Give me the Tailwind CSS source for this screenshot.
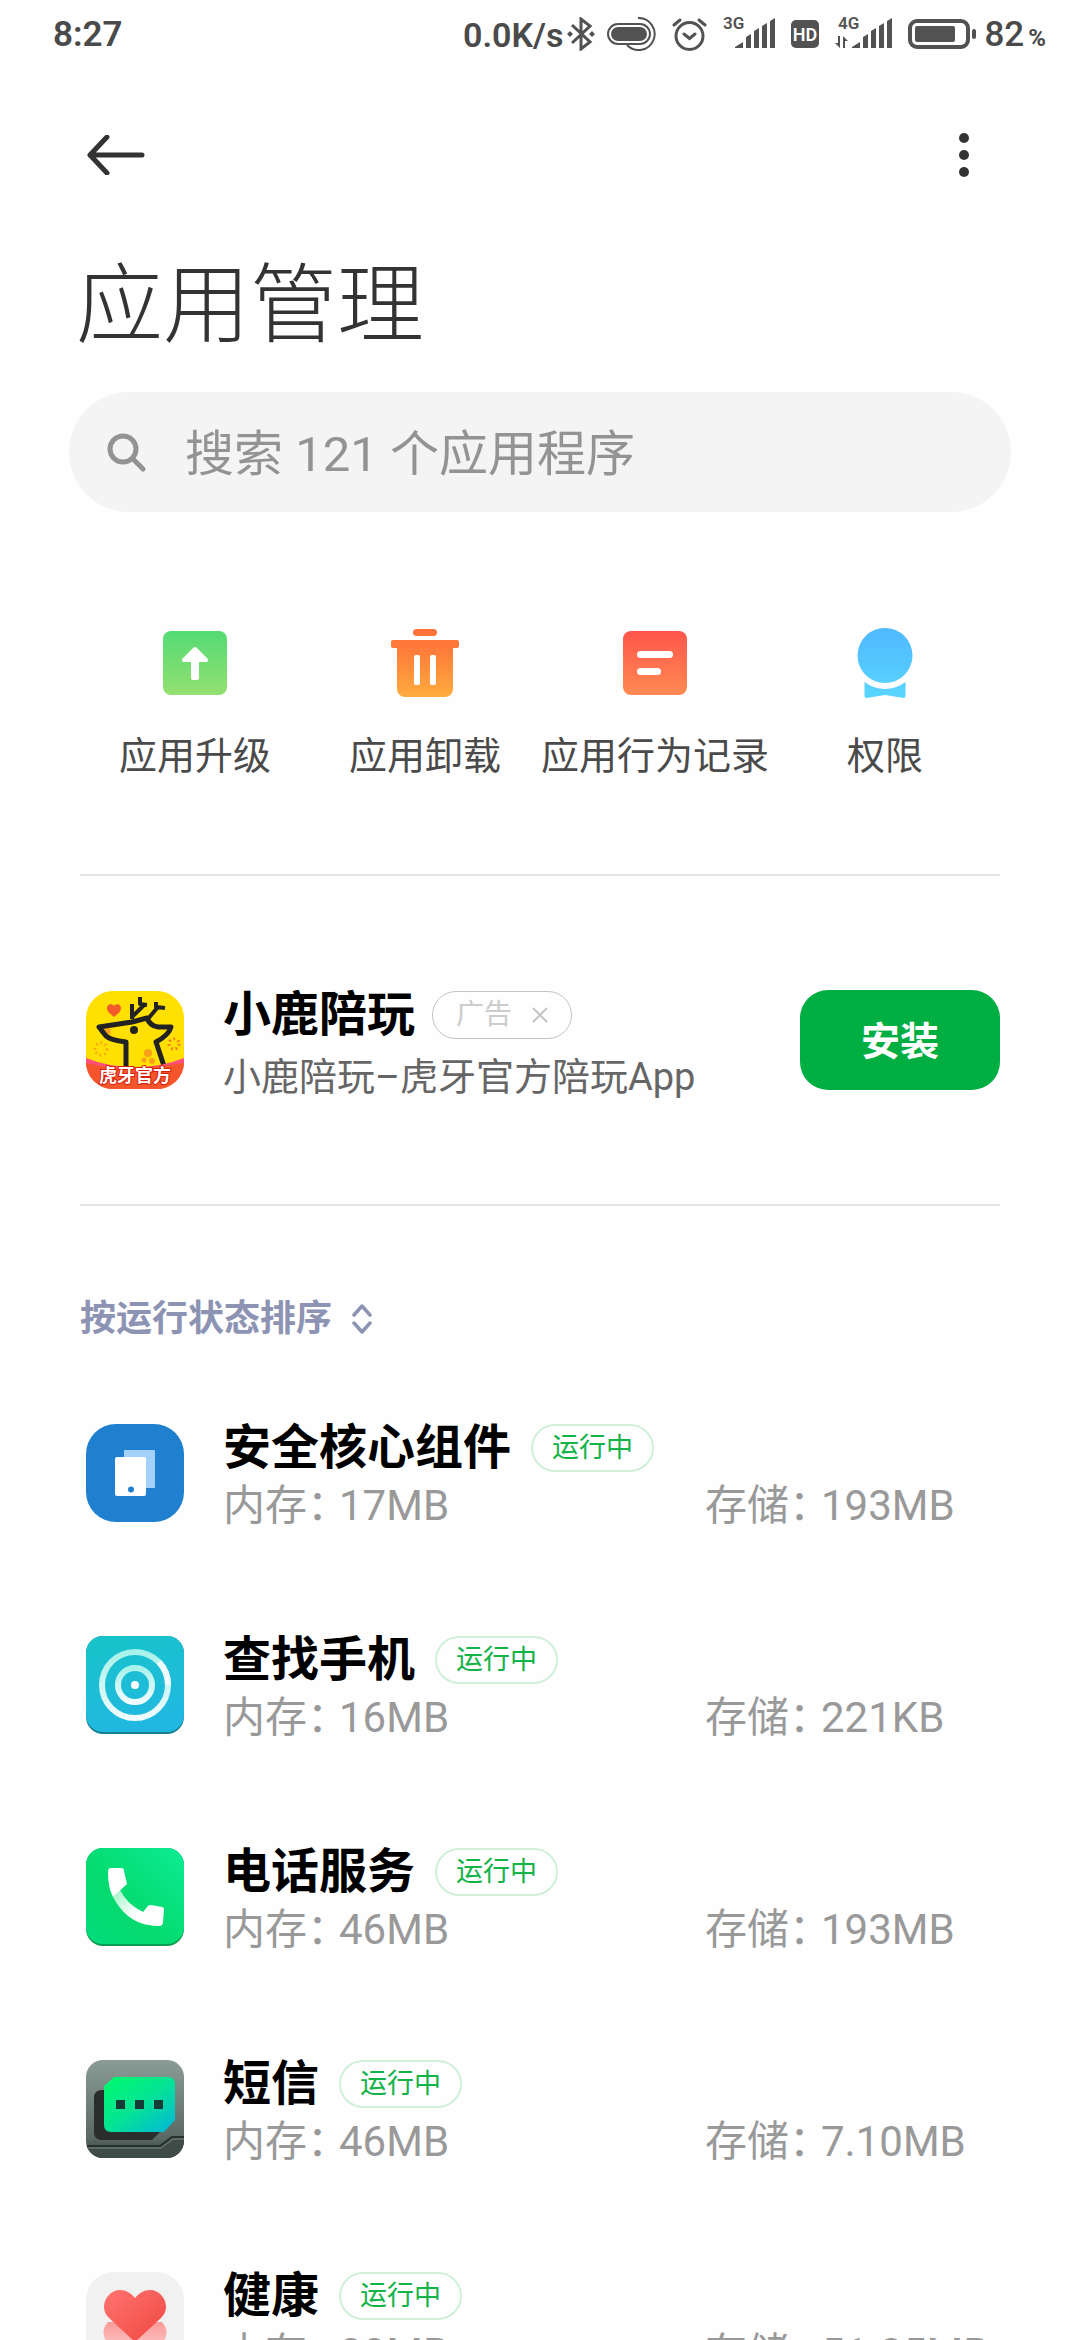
<!DOCTYPE html>
<html lang="zh-CN">
<head>
<meta charset="utf-8">
<meta name="viewport" content="width=device-width, initial-scale=1">
<title>应用管理</title>
<script src="https://cdn.jsdelivr.net/npm/@tailwindcss/browser@4"></script>
</head>
<body class="h-screen overflow-hidden bg-[#fefefe] font-[Roboto,'Noto_Sans_CJK_SC',sans-serif] text-black">

<!-- Status bar -->
<div class="flex h-[68px] items-center justify-between pl-[53px] pr-[34px] text-[#4a4a4a]">
  <time class="pt-[2px] text-[35px] leading-[40px] font-semibold">8:27</time>
  <div class="flex items-center gap-4">
    <div class="-mr-1 flex items-center gap-1">
      <span class="pt-[2px] text-[34px] leading-[40px] font-semibold">0.0K/s</span>
      <svg class="h-[34px] w-[28px]" viewBox="0 0 28 34" fill="none" stroke="#525252" stroke-width="3"><path d="M5 8l18 17-9 7V2l9 7L5 26"/><path d="M3 14l3 3-3 3-3-3zM25 14l3 3-3 3-3-3z" fill="#525252" stroke="none"/></svg>
    </div>
    <svg class="h-[34px] w-[49px]" viewBox="0 0 49 34" fill="none" stroke="#525252" stroke-width="2"><rect x="1" y="7" width="42" height="20" rx="10"/><rect x="4" y="10" width="36" height="14" rx="7" fill="#525252" stroke="none"/><path d="M31 1a16 16 0 1 1-11 27"/></svg>
    <svg class="h-[34px] w-[35px]" viewBox="0 0 35 34" fill="none" stroke="#525252" stroke-width="3" stroke-linecap="round"><circle cx="17.500" cy="19" r="13.500"/><path d="M12 17l5.500 4.500L23 17M2 8l6-5M33 8l-6-5"/></svg>
    <svg class="h-[50px] w-[52px]" viewBox="0 -8 52 50" fill="#525252"><text x="0" y="12" font-size="17" font-weight="600">3G</text><path d="M12 31v-1l8-5v6zM23 20l5-3v14h-5zM31 14l5-3v20h-5zM39 9l5-3v25h-5zM47 4l5-3v30h-5z"/></svg>
    <svg class="h-[34px] w-[28px]" viewBox="0 0 28 34"><rect y="3" width="28" height="28" rx="5" fill="#525252"/><text x="14" y="24" text-anchor="middle" font-size="18" font-weight="600" fill="#fff">HD</text></svg>
    <svg class="h-[50px] w-[57px]" viewBox="0 -8 57 50" fill="#525252"><text x="3" y="12" font-size="17" font-weight="600">4G</text><path d="M17 31v-1l8-5v6zM28 20l5-3v14h-5zM36 14l5-3v20h-5zM44 9l5-3v25h-5zM52 4l5-3v30h-5z"/><path d="M3 19h2v12l-5-5h3zM8 31h2v-7h3l-5-5z"/></svg>
    <div class="flex items-center gap-2">
      <svg class="h-[34px] w-[68px]" viewBox="0 0 68 34" fill="#525252"><rect x="2" y="4" width="58" height="26" rx="7" fill="none" stroke="#525252" stroke-width="4"/><rect x="7" y="9" width="40" height="16" rx="2"/><rect x="64" y="12" width="4" height="10" rx="2"/></svg>
      <span class="flex items-baseline gap-1 pt-[4px] text-[35px] leading-[40px] font-medium">82<span class="text-[24px] font-bold">%</span></span>
    </div>
  </div>
</div>

<!-- Toolbar -->
<header class="flex h-[174px] items-center justify-between px-[80px]">
  <button type="button" aria-label="返回" class="flex h-[80px] w-[72px] items-center justify-center">
    <svg class="h-[40px] w-[58px]" viewBox="0 0 58 40" fill="none" stroke="#333" stroke-width="5" stroke-linecap="round" stroke-linejoin="round"><path d="M3 20h52M20 2L3 20l17 18"/></svg>
  </button>
  <button type="button" aria-label="更多" class="flex h-[80px] w-[72px] items-center justify-center">
    <svg class="h-[46px] w-[10px]" viewBox="0 0 10 46" fill="#333"><circle cx="5" cy="6" r="5"/><circle cx="5" cy="23" r="5"/><circle cx="5" cy="40" r="5"/></svg>
  </button>
</header>

<main>
  <h1 class="px-[76px] pt-[4px] text-[87px] leading-[120px] font-light text-[#333]">应用管理</h1>

  <label class="mx-[69px] mt-[26px] flex h-[120px] items-center gap-[39px] rounded-full bg-[#f4f4f4] pr-10 pl-[38px]">
    <svg class="size-[39px] shrink-0" viewBox="0 0 39 39" fill="none" stroke="#939393" stroke-width="5" stroke-linecap="round"><circle cx="16" cy="16" r="13"/><path d="M26 26l10 10"/></svg>
    <input type="search" aria-label="搜索应用" placeholder="搜索 121 个应用程序" class="min-w-0 flex-1 bg-transparent pt-[5px] text-[49px] leading-[70px] outline-none placeholder:text-[#939393]">
  </label>

  <nav class="mt-[115px] grid grid-cols-4 px-[80px] text-[38px] leading-[54px] text-[#4a4a4a]">
    <a href="#upgrade" class="flex flex-col items-center gap-[30px] whitespace-nowrap">
      <svg class="size-[72px]" viewBox="0 0 72 72"><defs><linearGradient id="up" x2="0" y2="1"><stop stop-color="#54db74"/><stop offset="1" stop-color="#93e070"/></linearGradient></defs><rect x="4" y="4" width="64" height="64" rx="8" fill="url(#up)"/><path d="M36 22l11 11H25z" fill="#fff" stroke="#fff" stroke-width="4" stroke-linejoin="round"/><rect x="32" y="30" width="8" height="23" rx="2" fill="#fff"/></svg>
      应用升级
    </a>
    <a href="#uninstall" class="flex flex-col items-center gap-[30px] whitespace-nowrap">
      <svg class="size-[72px]" viewBox="0 0 72 72"><defs><linearGradient id="bin" gradientUnits="userSpaceOnUse" x1="0" y1="0" x2="0" y2="70"><stop stop-color="#ff7038"/><stop offset=".3" stop-color="#ff7a3a"/><stop offset="1" stop-color="#ffac3e"/></linearGradient></defs><g fill="url(#bin)"><rect x="24" y="2" width="24" height="7" rx="3.500"/><rect x="2" y="13" width="68" height="8" rx="2"/><path d="M8 20h56v42a8 8 0 0 1-8 8H16a8 8 0 0 1-8-8z"/></g><rect x="25" y="28" width="6" height="30" rx="2" fill="#fff"/><rect x="41" y="28" width="6" height="30" rx="2" fill="#fff"/></svg>
      应用卸载
    </a>
    <a href="#behavior" class="flex flex-col items-center gap-[30px] whitespace-nowrap">
      <svg class="size-[72px]" viewBox="0 0 72 72"><defs><linearGradient id="log" x2="0" y2="1"><stop stop-color="#ff564c"/><stop offset="1" stop-color="#ff8a52"/></linearGradient></defs><rect x="4" y="4" width="64" height="64" rx="8" fill="url(#log)"/><rect x="18" y="24" width="36" height="7" rx="3.500" fill="#fff"/><rect x="18" y="41" width="24" height="7" rx="3.500" fill="#fff"/></svg>
      应用行为记录
    </a>
    <a href="#permission" class="flex flex-col items-center gap-[30px] whitespace-nowrap">
      <svg class="size-[72px]" viewBox="0 0 72 72"><defs><linearGradient id="medal" gradientUnits="userSpaceOnUse" x1="0" y1="0" x2="0" y2="72"><stop stop-color="#4fb8ff"/><stop offset="1" stop-color="#5ad6ff"/></linearGradient></defs><g fill="url(#medal)"><circle cx="36" cy="28.500" r="27.500"/><path d="M15.500 55a33.500 33.500 0 0 0 41 0v14q0 2-2 2L36 68l-18.500 3q-2 0-2-2z"/></g></svg>
      权限
    </a>
  </nav>

  <!-- Promoted app -->
  <section class="mx-[80px] mt-[91px] flex h-[332px] items-center border-y-2 border-[#e4e4e4] pl-[6px]">
    <svg class="size-[98px] shrink-0" viewBox="0 0 98 98">
      <defs><clipPath id="deer"><rect width="98" height="98" rx="27"/></clipPath></defs>
      <g clip-path="url(#deer)">
        <rect width="98" height="98" fill="#ffe000"/>
        <path d="M28 26c-5-4-7-6-7-9 0-4 5-5 7-2 2-3 7-2 7 2 0 3-2 5-7 9z" fill="#f4592b"/>
        <path d="M18 37l7 1-1 6-4-1z" fill="#f9a11b"/>
        <g fill="none" stroke="#222" stroke-width="5" stroke-linejoin="round"><path d="M40 75V51q-16-2-20-6l-7-9 33-5 15-4q3 8 11 9h13q-2 8-15 15l8 24"/><path d="M46 13v15M47 25l12-12M54 6v7l7 1M61 29l11-13M70 11v5l9 1" stroke-width="4"/></g>
        <circle cx="48" cy="39" r="4" fill="#222"/>
        <g fill="#f9a11b"><circle cx="62" cy="62" r="4"/><circle cx="58" cy="69" r="2.500"/><circle cx="66" cy="70" r="3"/></g>
        <g fill="none" stroke="#f9a11b" stroke-width="3" stroke-dasharray="1.500 3"><circle cx="15" cy="58" r="6"/><circle cx="88" cy="53" r="5" stroke="#f4702b"/></g>
        <path d="M0 67q22 9 49 9t49-9v31H0z" fill="#ff4f7a"/>
        <path d="M0 72q24 6 49 5t49-5v26H0z" fill="#f4552b"/>
        <text x="49" y="91" text-anchor="middle" font-size="18" font-weight="700" fill="#fff" stroke="#d8200c" stroke-width="2" paint-order="stroke">虎牙官方</text>
      </g>
    </svg>
    <div class="ml-[39px] flex min-w-0 flex-1 flex-col gap-[8px] pt-[10px]">
      <div class="flex items-center gap-[17px]">
        <h2 class="text-[48px] leading-[56px] font-bold">小鹿陪玩</h2>
        <button type="button" aria-label="关闭广告" class="flex h-[48px] items-center gap-[20px] rounded-full border border-[#c4c4c4] px-[23px] text-[28px] leading-[40px] text-[#ccc]">广告
          <svg class="size-[16px]" viewBox="0 0 16 16" stroke="#c4c4c4" stroke-width="2"><path d="M1 1l14 14M15 1L1 15"/></svg>
        </button>
      </div>
      <p class="text-[38px] leading-[52px] text-[#666]">小鹿陪玩–虎牙官方陪玩App</p>
    </div>
    <button type="button" class="h-[100px] w-[200px] rounded-[28px] bg-[#00ae42] pt-[3px] text-[39px] leading-[56px] font-bold text-white">安装</button>
  </section>

  <button type="button" class="mt-[87px] ml-[80px] flex items-center gap-[20px] text-[36px] leading-[52px] font-bold text-[#8d93b3]">按运行状态排序
    <svg class="h-[30px] w-[20px]" viewBox="0 0 20 30" fill="none" stroke="#8d93b3" stroke-width="3.500" stroke-linecap="round" stroke-linejoin="round"><path d="M2 11l8-9 8 9M2 19l8 9 8-9"/></svg>
  </button>

  <ul class="mt-[22px] px-[80px]">
    <li class="flex h-[212px] items-center pl-[6px]">
      <svg class="size-[98px] shrink-0" viewBox="0 0 98 98"><rect width="98" height="98" rx="30" fill="#1e80ce"/><rect x="38" y="26" width="31" height="38" rx="1" fill="#a3d1f9"/><rect x="29" y="33" width="31" height="39" rx="2" fill="#fff"/><circle cx="45" cy="65.500" r="3" fill="#1e80ce"/></svg>
      <div class="ml-[39px] flex-1 pt-[8px]">
        <div class="flex items-center gap-[20px]"><h2 class="text-[48px] leading-[56px] font-bold">安全核心组件</h2><span class="rounded-full border-2 border-[#d0f0da] px-[19px] text-[27px] leading-[44px] text-[#12b347]">运行中</span></div>
        <dl class="mt-[2px] grid grid-cols-[482px_1fr] text-[42px] leading-[56px] text-[#999]">
          <div class="flex"><dt class="w-[116px] whitespace-nowrap [font-feature-settings:'halt']">内存：</dt><dd>17MB</dd></div>
          <div class="flex"><dt class="w-[116px] whitespace-nowrap [font-feature-settings:'halt']">存储：</dt><dd>193MB</dd></div>
        </dl>
      </div>
    </li>
    <li class="flex h-[212px] items-center pl-[6px]">
      <svg class="size-[98px] shrink-0" viewBox="0 0 98 98"><defs><linearGradient id="find" x1="0" y1="0" x2=".3" y2="1"><stop stop-color="#18c4c8"/><stop offset="1" stop-color="#20b8e0"/></linearGradient><linearGradient id="ring" x2="0" y2="1"><stop stop-color="#a8f2ea"/><stop offset="1" stop-color="#f0fcff"/></linearGradient></defs><rect width="98" height="98" rx="17" fill="#15808f"/><rect width="98" height="96" rx="17" fill="url(#find)"/><g fill="none" stroke="url(#ring)" stroke-width="6"><circle cx="49" cy="49" r="33"/><circle cx="49" cy="49" r="17"/></g><path d="M73 26a33 33 0 0 1 9 23" fill="none" stroke="#f0fcff" stroke-width="6"/><circle cx="49" cy="49" r="4" fill="#fff"/></svg>
      <div class="ml-[39px] flex-1 pt-[8px]">
        <div class="flex items-center gap-[20px]"><h2 class="text-[48px] leading-[56px] font-bold">查找手机</h2><span class="rounded-full border-2 border-[#d0f0da] px-[19px] text-[27px] leading-[44px] text-[#12b347]">运行中</span></div>
        <dl class="mt-[2px] grid grid-cols-[482px_1fr] text-[42px] leading-[56px] text-[#999]">
          <div class="flex"><dt class="w-[116px] whitespace-nowrap [font-feature-settings:'halt']">内存：</dt><dd>16MB</dd></div>
          <div class="flex"><dt class="w-[116px] whitespace-nowrap [font-feature-settings:'halt']">存储：</dt><dd>221KB</dd></div>
        </dl>
      </div>
    </li>
    <li class="flex h-[212px] items-center pl-[6px]">
      <svg class="size-[98px] shrink-0" viewBox="0 0 98 98"><defs><linearGradient id="call" x1="1" y1="0" x2="0" y2="1"><stop stop-color="#0cec94"/><stop offset=".6" stop-color="#04da6e"/><stop offset="1" stop-color="#04dc7c"/></linearGradient><linearGradient id="grip" gradientUnits="userSpaceOnUse" x1="30" y1="44" x2="50" y2="66"><stop stop-color="#a8f6cc"/><stop offset="1" stop-color="#fff"/></linearGradient></defs><rect width="98" height="98" rx="17" fill="#0a9c52"/><rect width="98" height="96" rx="17" fill="url(#call)"/><path d="M27 49l7-7q7 14 23 22l4 13Q39 72 27 49z" fill="url(#grip)"/><path d="M25 20h10q3 0 3 3l3 13-14 13q-5-9-5-25 0-4 3-4zM52 63l5 1 5-6q1-1 3-1l11 2q2 0 2 3l-1 12q0 4-4 4-12 0-21-5z" fill="#fff"/></svg>
      <div class="ml-[39px] flex-1 pt-[8px]">
        <div class="flex items-center gap-[20px]"><h2 class="text-[48px] leading-[56px] font-bold">电话服务</h2><span class="rounded-full border-2 border-[#d0f0da] px-[19px] text-[27px] leading-[44px] text-[#12b347]">运行中</span></div>
        <dl class="mt-[2px] grid grid-cols-[482px_1fr] text-[42px] leading-[56px] text-[#999]">
          <div class="flex"><dt class="w-[116px] whitespace-nowrap [font-feature-settings:'halt']">内存：</dt><dd>46MB</dd></div>
          <div class="flex"><dt class="w-[116px] whitespace-nowrap [font-feature-settings:'halt']">存储：</dt><dd>193MB</dd></div>
        </dl>
      </div>
    </li>
    <li class="flex h-[212px] items-center pl-[6px]">
      <svg class="size-[98px] shrink-0" viewBox="0 0 98 98"><defs><linearGradient id="steel" x2="0" y2="1"><stop stop-color="#8b9c96"/><stop offset=".8" stop-color="#596862"/><stop offset="1" stop-color="#36423e"/></linearGradient><linearGradient id="bubble" x2="1" y2="1"><stop stop-color="#00fa6c"/><stop offset=".5" stop-color="#04e494"/><stop offset="1" stop-color="#04b4dc"/></linearGradient><clipPath id="sms"><rect width="98" height="98" rx="17"/></clipPath></defs><g clip-path="url(#sms)"><rect width="98" height="98" fill="url(#steel)"/><path d="M0 87h74l12-9h12v20H0z" fill="#3e4b46"/><path d="M0 86h74l12-9h12" fill="none" stroke="#26302c" stroke-width="2"/><path d="M0 88h75l12-9h11" fill="none" stroke="#7b8a84" stroke-width="1"/></g><path d="M16 30h50l8 42-8 8H16q-8 0-8-8V38q0-8 8-8z" fill="#2b2c2c"/><path d="M28 17h54q7 0 7 7v36L78 72H25q-7 0-7-7V26z" fill="url(#bubble)"/><path d="M30 40h9v9h-9zM49 40h9v9h-9zM68 40h9v9h-9z" fill="#163c38"/></svg>
      <div class="ml-[39px] flex-1 pt-[8px]">
        <div class="flex items-center gap-[20px]"><h2 class="text-[48px] leading-[56px] font-bold">短信</h2><span class="rounded-full border-2 border-[#d0f0da] px-[19px] text-[27px] leading-[44px] text-[#12b347]">运行中</span></div>
        <dl class="mt-[2px] grid grid-cols-[482px_1fr] text-[42px] leading-[56px] text-[#999]">
          <div class="flex"><dt class="w-[116px] whitespace-nowrap [font-feature-settings:'halt']">内存：</dt><dd>46MB</dd></div>
          <div class="flex"><dt class="w-[116px] whitespace-nowrap [font-feature-settings:'halt']">存储：</dt><dd>7.10MB</dd></div>
        </dl>
      </div>
    </li>
    <li class="flex h-[212px] items-center pl-[6px]">
      <svg class="size-[98px] shrink-0" viewBox="0 0 98 98"><defs><linearGradient id="heart" x2="1" y2="1"><stop stop-color="#ff7470"/><stop offset="1" stop-color="#f04640"/></linearGradient><linearGradient id="glow" x2="0" y2="1"><stop stop-color="#fa9a98"/><stop offset="1" stop-color="#fbe0e0"/></linearGradient></defs><rect width="98" height="98" rx="28" fill="#f1f1f1"/><path d="M49 92L22 72q-9-12 0-22h54q9 10 0 22z" fill="url(#glow)"/><path d="M49 70L23 46q-5-5-5-11c0-9 7-17 16-17 6 0 11 3 15 8 4-5 9-8 15-8 9 0 16 8 16 17q0 6-5 11z" fill="url(#heart)"/></svg>
      <div class="ml-[39px] flex-1 pt-[8px]">
        <div class="flex items-center gap-[20px]"><h2 class="text-[48px] leading-[56px] font-bold">健康</h2><span class="rounded-full border-2 border-[#d0f0da] px-[19px] text-[27px] leading-[44px] text-[#12b347]">运行中</span></div>
        <dl class="mt-[2px] grid grid-cols-[482px_1fr] text-[42px] leading-[56px] text-[#999]">
          <div class="flex"><dt class="w-[116px] whitespace-nowrap [font-feature-settings:'halt']">内存：</dt><dd>88MB</dd></div>
          <div class="flex"><dt class="w-[116px] whitespace-nowrap [font-feature-settings:'halt']">存储：</dt><dd>51.85MB</dd></div>
        </dl>
      </div>
    </li>
  </ul>
</main>
</body>
</html>
